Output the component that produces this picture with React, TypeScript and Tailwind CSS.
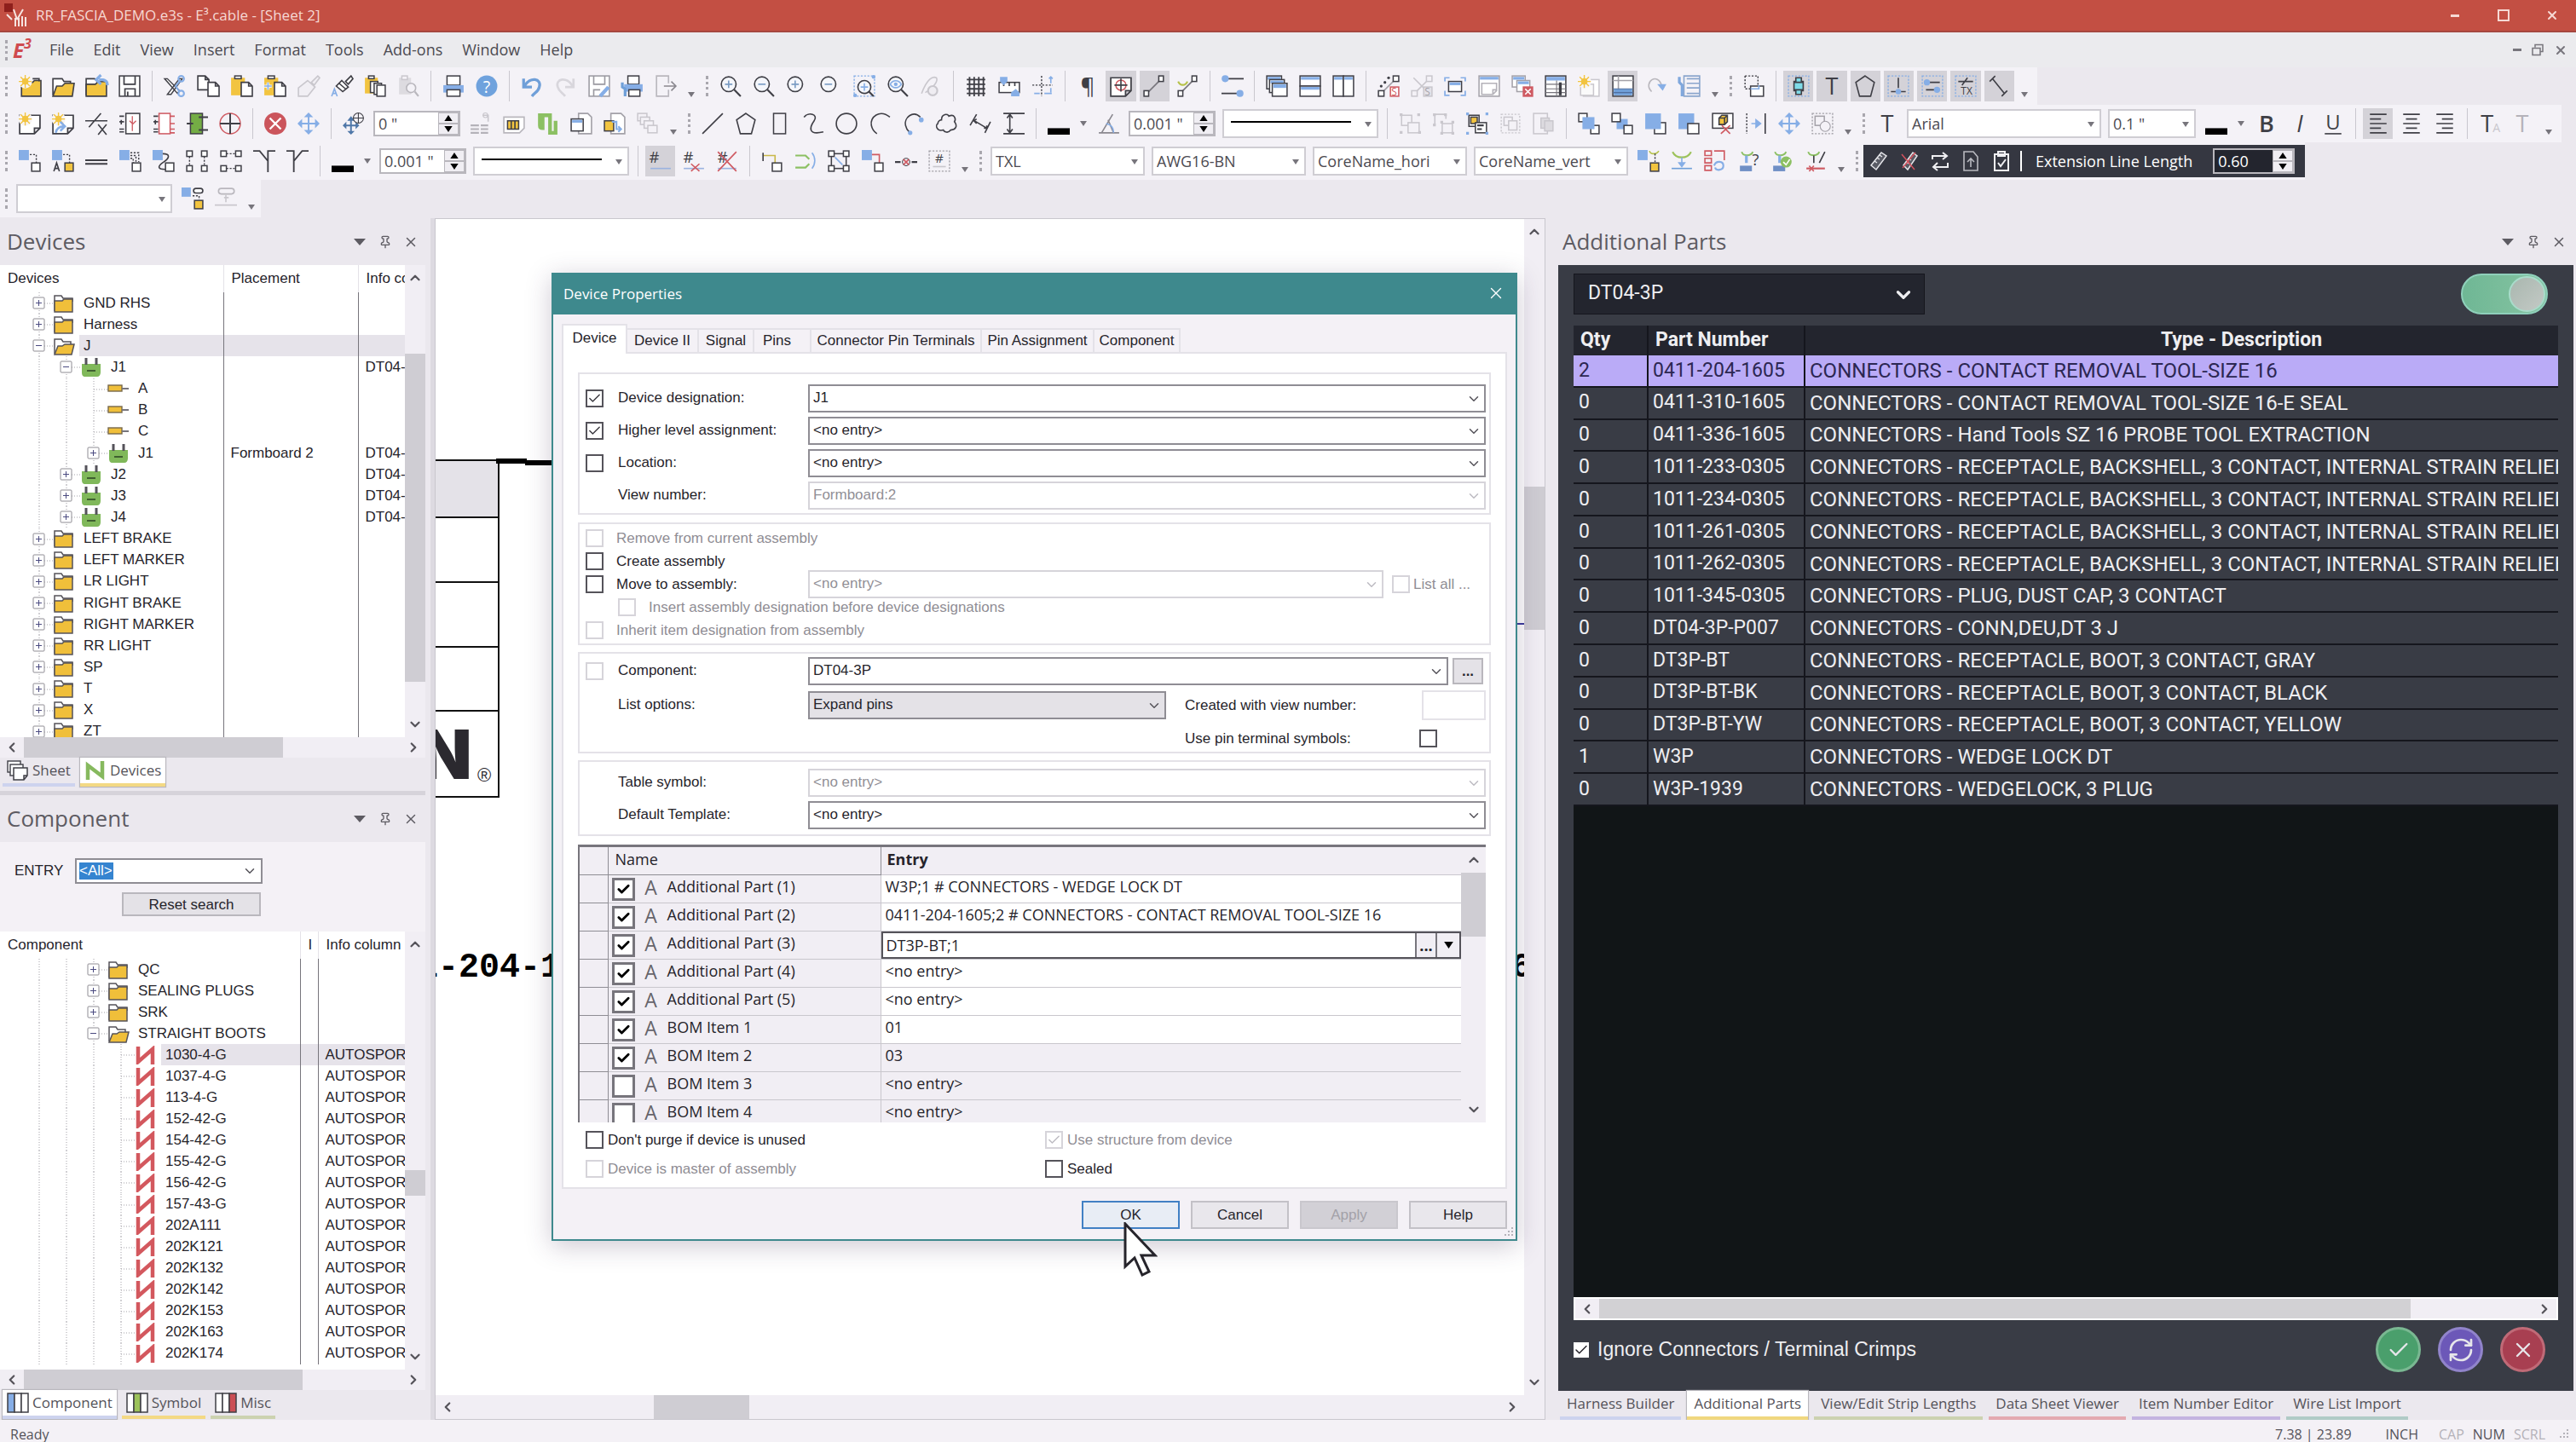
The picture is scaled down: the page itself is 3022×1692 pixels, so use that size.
import React from 'react';
import { Check, ChevronDown, ChevronLeft, ChevronRight, ChevronUp, Pin, RefreshCw, X } from 'lucide-react';

const K = '#3f3f46';
const B = '#86aee6';
const Y = '#f2c440';
const G = '#8cc063';
const R = '#cf5a62';
const L = '#c9c7cd';

const sq = (x: number, y: number, w: number, h: number, fill = '#fff', stroke = K) => (
  <rect x={x} y={y} width={w} height={h} fill={fill} stroke={stroke} strokeWidth={1.4} />
);

const line = (d: string, stroke = K, fill = 'none', width = 1.5) => (
  <path d={d} fill={fill} stroke={stroke} strokeWidth={width} />
);

const dots = (d: string, stroke = K) => (
  <path d={d} fill="none" stroke={stroke} strokeWidth={1.3} strokeDasharray="2 1.6" />
);

const glyph = (text: string, x: number, y: number, size: number, fill = K) => (
  <text x={x} y={y} fontSize={size} fill={fill} stroke="none" textAnchor="middle" fontFamily="Open Sans, sans-serif">
    {text}
  </text>
);

const star = (
  <>
    <circle cx="7" cy="7" r="7.5" fill="#f7f4f4" />
    {line('M7 0v14M0 7h14M2 2l10 10M12 2L2 12', Y, 'none', 1.3)}
    <circle cx="7" cy="7" r="3.5" fill={Y} />
  </>
);
const lens = (plus: boolean, tail: boolean) => (
  <>
    <circle cx="10" cy="10" r="8" fill="#f4f6fb" stroke={K} strokeWidth="1.5" />
    {line(plus ? 'M6 10h8M10 6v8' : 'M6 10h8', '#7a9cc4')}
    {tail && line('M16 16l7 7', K, 'none', 2)}
  </>
);
const page = (stroke = K) => line('M1 3h22v14l-6 6H1zM23 17h-6v6', stroke, '#fff', 1.6);
const selectBox = (stroke = B) => dots('M1 1h22v22H1z', stroke);
const drop = line('M4 2c1 5 10 5 12 0', G, 'none', 1.8);
const smallPage = (x: number, y: number) => (
  <g transform={`translate(${x} ${y})`}>{line('M0 0h8l4 4v11H0zM8 0v4h4', K, '#fff')}</g>
);

const ICONS: Record<string, React.ReactNode> = {
  newProject: <>{line('M3 8h12l2-2h7v17H3z', K, Y)}{line('M15 4h7v3')}{star}</>,
  open: <>{line('M1 22V4h10l2 3h7v4', K, '#fff')}{line('M1 23l4-11h6l3-3h10l-2 14z', K, Y)}</>,
  openSheet: <>{line('M1 22V4h9l3 3', K, '#fff')}{line('M1 10h10l3-3h9v16H1z', K, Y)}{line('M24 11c0-5-3-6-9-6M17 0l-5 5 5 5', B, 'none', 3)}</>,
  save: <>{sq(1, 1, 22, 22)}{line('M6 1v9h12V1M7 23v-8h11v8M10 18v5', K, 'none', 1.6)}</>,
  cut: <>{line('M1 4h3l13 13-2 3zM20 4h-3L4 21h4z', K, '#fff', 1.3)}<circle cx="19" cy="4" r="3" fill="none" stroke={B} strokeWidth="2" /><circle cx="19" cy="20" r="3" fill="none" stroke={B} strokeWidth="2" />{line('M17 7l-4 5 4 6', B, 'none', 2)}</>,
  copy: <>{smallPage(1, 1)}{smallPage(12, 8)}</>,
  paste: <><rect x="1" y="3" width="15" height="19" fill={Y} />{sq(5, 1, 7, 3)}{smallPage(12, 8)}</>,
  pasteAdd: <><rect x="1" y="3" width="15" height="19" fill={Y} />{sq(5, 1, 7, 3)}{smallPage(12, 8)}{line('M1 12h8M5 8v8', '#fff', 'none', 3)}{line('M1 12h8M5 8v8', B)}</>,
  brushOff: <>{line('M15 8l7-7 2 2-6 8zM11 6l8 7-8 10H1v-9z', L, '#f1eff4')}</>,
  brush: <>{line('M16 7l6-6 2 3-5 6zM12 6l7 7-6 5-7-6zM9 9l7 6', K, '#fff')}{line('M1 23l3-8 3 8M2 20h4', B)}</>,
  pasteMulti: <><rect x="1" y="3" width="14" height="17" fill={Y} />{sq(5, 1, 6, 3)}{sq(7, 7, 8, 12)}{sq(11, 9, 8, 12)}{sq(14, 11, 9, 12)}</>,
  findPaste: <><rect x="2" y="3" width="13" height="18" fill="#dddbe0" />{sq(5, 1, 6, 4, '#f4f2f7', L)}<circle cx="15" cy="14" r="5" fill="#f4f2f7" stroke="#b9b7bd" strokeWidth="1.5" />{line('M19 18l4 5', '#b9b7bd', 'none', 2)}</>,
  print: <>{sq(5, 1, 14, 10)}<rect x="1" y="11" width="22" height="8" fill={B} />{sq(5, 16, 14, 7)}</>,
  help: <><circle cx="12" cy="12" r="11.5" fill="#6fa2dd" />{glyph('?', 12, 19, 18, '#fff')}</>,
  undo: line('M3 4v9h9M4 12C10 1 23 4 20 13c-1 5-5 6-8 10', '#6f9fd8', 'none', 3),
  redo: line('M21 4v9h-9M20 12C14 1 1 4 4 13c1 5 5 6 8 10', '#d8d6dc', 'none', 2.5),
  saveEdit: <>{sq(1, 1, 22, 22, '#fff', '#9a99a0')}{line('M6 1v9h12V1M6 23v-7h7', '#9a99a0')}{line('M13 23l9-10', B, 'none', 4)}</>,
  printCfg: <>{sq(7, 1, 12, 9)}<rect x="3" y="10" width="20" height="8" fill={B} />{sq(8, 16, 12, 7)}{line('M1 8v5l3 2v8', '#6f9fd8', 'none', 3)}</>,
  exportOff: <>{line('M15 9V1H2v22h13v-7', '#b9b7bd')}{line('M10 12h13M18 7l5 5-5 5', '#8a888f')}</>,
  zoomInW: lens(true, true),
  zoomOutW: lens(false, true),
  zoomIn: lens(true, false),
  zoomOut: lens(false, false),
  zoomArea: <>{dots('M1 1h22v22H1z', B)}<circle cx="12" cy="13" r="7" fill="#f4f6fb" stroke={K} strokeWidth="1.5" />{line('M8 13h8M12 9v8', B)}{line('M17 18l5 5', K, 'none', 2)}<circle cx="22" cy="2" r="2" fill={B} /><circle cx="2" cy="22" r="2" fill={B} /></>,
  zoomEye: <><circle cx="10" cy="10" r="8" fill="#f4f6fb" stroke={K} strokeWidth="1.5" />{line('M4 10c3-5 9-5 12 0-3 5-9 5-12 0z', B)}<circle cx="10" cy="10" r="2" fill={B} />{line('M16 16l7 7', K, 'none', 2)}</>,
  zoomPen: <>{line('M2 20C8 4 14 1 18 3c2 3-2 10-12 16', L)}<circle cx="14" cy="17" r="5" fill="#efedf2" stroke={L} strokeWidth="2" /></>,
  grid: line('M2 5h20M2 10h20M2 15h20M2 20h20M5 2v21M10 2v21M15 2v21M20 2v21', K, 'none', 1.7),
  ruler: <>{sq(1, 8, 22, 11)}{line('M6 8v4M12 8v4M18 8v4')}<path d="M2 2h8v5l-4 4-4-4zM14 23h9v-4l-4-4-5 4z" fill={B} /></>,
  snap: <>{dots('M1 11h22M11 1v22')}{line('M21 2v7M19 4l2-2 2 2M3 20h6M14 20h8M21 14v5', B)}</>,
  pilcrow: glyph('¶', 12, 20, 24),
  origin: <>{page()}<circle cx="12" cy="11" r="5.5" fill="none" stroke={R} strokeWidth="1.4" />{line('M12 4v14M5 11h14')}</>,
  connect: <>{line('M5 19L19 5', '#77757c')}{sq(1, 17, 5, 6)}{sq(17, 1, 5, 6)}</>,
  connectGreen: <>{line('M5 19L19 5', '#77757c')}{sq(2, 17, 5, 6)}{sq(17, 1, 5, 6)}{line('M2 7c2 5 8 5 10 0', '#b6c24a', 'none', 2)}</>,
  sliders: <>{line('M4 4h20M0 20h20')}<circle cx="4" cy="4" r="3.8" fill={B} /><circle cx="20" cy="20" r="3.8" fill={B} /></>,
  cascade: <>{sq(1, 1, 16, 14)}<path d="M2 2h14v3H2z" fill={B} />{sq(4, 5, 16, 14)}<path d="M5 6h14v3H5z" fill={B} />{sq(7, 9, 16, 14)}<path d="M8 10h14v4H8z" fill={B} /></>,
  tileH: <>{sq(1, 1, 22, 11)}{sq(1, 12, 22, 11)}<path d="M2 2h20v3H2zM2 13h20v3H2z" fill={B} /></>,
  tileV: <>{sq(1, 1, 11, 22)}{sq(12, 1, 11, 22)}<path d="M2 2h9v3H2zM13 2h9v3h-9z" fill={B} /></>,
  autoS: <>{line('M7 17L18 6', '#a3a1a8')}<circle cx="4" cy="12" r="1.5" fill={K} /><circle cx="8" cy="8" r="1.5" fill={K} /><circle cx="12" cy="3" r="1.5" fill={K} />{sq(1, 17, 6, 6)}{sq(17, 1, 6, 6)}{sq(14, 13, 9, 10, '#fff', R)}{glyph('S', 18, 22, 11, R)}</>,
  autoSOff: <>{line('M3 3l17 17M7 17L18 6', L)}{sq(1, 17, 6, 6, '#f4f2f7', L)}{sq(17, 1, 6, 6, '#f4f2f7', L)}{sq(14, 13, 9, 10, '#e4e2e8', L)}{glyph('S', 18, 22, 11, '#a3a1a8')}</>,
  focus: <>{line('M1 7V3h5M18 3h5v4M23 17v5h-5M6 22H1v-5', B, 'none', 1.6)}{sq(5, 7, 14, 11)}<path d="M6 8h12v3H6z" fill={B} /></>,
  winPage: <>{sq(1, 1, 22, 22, '#fff', '#a3a1a8')}<path d="M2 2h20v3H2z" fill={B} />{line('M4 9h16v8l-4 4H4zM20 16h-4v5', '#b4b2b9')}</>,
  winClose: <>{sq(1, 1, 14, 12, '#fff', '#a3a1a8')}{sq(6, 6, 14, 12, '#fff', '#a3a1a8')}<path d="M2 2h12v3H2zM7 7h12v3H7z" fill={B} />{sq(13, 13, 10, 10, R, R)}{line('M15 15l6 6M21 15l-6 6', '#fff')}</>,
  sheetTable: <>{sq(1, 1, 22, 22)}<path d="M2 2h20v4H2z" fill={B} />{line('M1 10h22M1 15h22M13 6v17M1 19h22', '#77757c', 'none', 1)}{line('M17 8v14', K, 'none', 3)}</>,
  newWin: <>{sq(6, 5, 17, 18, '#fff', L)}{sq(3, 10, 14, 12, '#fafafa', L)}{star}</>,
  panelBottom: <>{sq(1, 1, 22, 22)}{line('M7 1v15M1 6h22', '#a3a1a8')}<path d="M2 15h20v7H2z" fill="#6f9fd8" />{line('M1 15h22M1 19h22', '#4f6f9f', 'none', 1)}</>,
  reload: <>{line('M7 18C-3 8 14-4 18 12', '#b9b7bd')}<path d="M13 10h10l-4 7z" fill={B} /></>,
  listTool: <>{line('M9 4h14M9 9h14M9 14h14M9 20h14M6 1h17v22H6z', '#8ba6cd')}{line('M1 2v6l3 3v12', '#7fa7dd', 'none', 3)}</>,
  overlap: <>{dots('M2 1h14v14H2z')}{sq(8, 12, 14, 11)}{line('M8 15h9v-4', B)}</>,
  plugSel: <>{selectBox()}{line('M9 3h6v4h2v10h-2v4H9v-4H7V7h2zM7 8h10M7 16h10', K, '#7fdbe8')}</>,
  bigT: glyph('T', 12, 21, 25),
  pentagon: line('M12 1l10 7-4 15H6L2 8z'),
  selDown: <>{selectBox()}{line('M12 3v11M4 18h16')}<circle cx="12" cy="18" r="3" fill={B} /></>,
  selSlide: <>{selectBox()}{line('M8 8h12M5 16h12')}<circle cx="6" cy="8" r="3.4" fill={B} /><circle cx="17" cy="16" r="3.4" fill={B} /></>,
  selTx: <>{selectBox()}{line('M4 7h16M8 11l6-8')}{glyph('TX', 13, 21, 11)}</>,
  dimension: <>{line('M5 4l13 16M2 7l6-6M15 23l6-6')}</>,
  newSheet: <>{page()}{star}</>,
  newSheetLink: <>{page()}{star}{line('M4 22c1-5 4-7 9-7M9 10l5 5-5 5', B, 'none', 2.4)}</>,
  netX: <>{line('M0 9h24M4 16L17 1')}{line('M14 13l9 11M23 13l-9 11')}</>,
  symbolRed: <>{sq(8, 1, 15, 22)}{line('M1 4h5M1 10h5M3 8v5M1 18h5M1 21h5')}{line('M15 4v16M19 9l-4 4M12 9l3 3', R, 'none', 1.2)}</>,
  block: <>{sq(7, 1, 12, 22, '#fff', R)}{line('M1 4h5M1 10h5M3 8v5M1 18h5M1 21h5')}{line('M19 4h5M19 12h5M19 18h5M19 22h5', R)}</>,
  blockGreen: <>{sq(5, 1, 13, 22, '#74ad45')}{line('M1 12h7M14 5h10M14 19h10', K, 'none', 1.8)}</>,
  crosshair: <><circle cx="12" cy="12" r="11" fill="none" stroke={R} strokeWidth="1.4" />{line('M12 1v22M1 12h22', K, 'none', 1.8)}</>,
  removeX: <><circle cx="12" cy="12" r="12" fill="#cb555c" />{line('M6 6l12 12M18 6L6 18', '#fff', 'none', 2.2)}</>,
  move: <>{line('M12 3v18M3 12h18', B, 'none', 1.8)}<path d="M12 0l5 5H7zM12 24l5-5H7zM0 12l5-5v10zM24 12l-5-5v10z" fill={B} /></>,
  moveOrigin: <>{line('M9 7v15M2 14h14', '#4f77a8', 'none', 1.8)}<path d="M9 4l4 5H5zM9 24l4-4H5zM0 14l4-4v8zM18 14l-4-4v8z" fill="#4f77a8" /><circle cx="17" cy="6" r="5.5" fill="none" stroke={K} />{line('M17 0v12M11 6h12', K, 'none', 1)}</>,
  stackOff: <>{line('M1 14h9M1 18h9M1 22h9M12 14h8M12 18h8M12 22h8', '#b4b2b9', 'none', 2)}{line('M14 3h6v7', L)}<circle cx="17" cy="3" r="2.5" fill="none" stroke={L} /></>,
  sheetGold: <>{line('M1 5h22v12l-5 5H1z', '#b9b7bd', '#fff')}{sq(5, 9, 12, 9, Y)}{line('M9 9v9M13 9v9')}</>,
  wave: line('M4 1v13c0 2 1 3 3 3V3h8v19h6V9', G, 'none', 4),
  sheetCopy: <>{line('M9 1h10l4 4v18H9z', '#a3a1a8', '#fff')}{sq(1, 7, 13, 13)}<path d="M2 8h11v3H2z" fill={B} /></>,
  sheetGoldCopy: <>{line('M8 1h11l4 4v18H8z', '#a3a1a8', '#fff')}{sq(1, 9, 10, 11, Y)}{line('M9 10h5v8h5M16 15l3 3-3 3', B, 'none', 2)}</>,
  layersOff: <>{sq(1, 1, 10, 8, '#f4f2f7', L)}{sq(4, 5, 10, 8, '#f4f2f7', L)}{sq(8, 9, 10, 8, '#f4f2f7', L)}{sq(12, 14, 10, 8, '#f4f2f7', L)}</>,
  lineTool: line('M1 23L23 1'),
  rect: sq(6, 1, 13, 22, 'none'),
  spline: line('M2 5c5-6 16-3 11 4s-7 16 10 12'),
  circle: <circle cx="12" cy="12" r="11" fill="none" stroke={K} strokeWidth="1.5" />,
  arc: line('M23 5C12-4 1 5 3 14c1 5 3 7 6 9'),
  arcBlue: <>{line('M20 5C12-3 2 6 4 14c1 5 3 6 5 8')}<circle cx="21" cy="8" r="2.6" fill={B} /><circle cx="9" cy="22" r="2.4" fill={B} /></>,
  cloud: line('M6 8c0-7 7-7 8-4 6-3 8 3 6 6 4 5 1 9-4 9-3 4-7 2-8 0-7 2-9-5-6-7 0-2 2-4 4-4z'),
  dimTool: line('M4 8l15 9M8 2L1 14M23 10l-6 12M8 7l-3 2 3 3M16 17h3v-3'),
  beam: line('M1 1h23M1 23h23M8 3v18M5 6l3-4 3 4M5 18l3 4 3-4'),
  swatch: <rect x="0" y="17" width="24" height="7" fill="#000" />,
  angle: <>{line('M1 22h22M4 22l12-20M11 8l6 14', '#8a888f')}{line('M9 12c5 1 8 4 8 10', B)}</>,
  group1: <>{sq(3, 3, 11, 11, '#f4f2f7', L)}{sq(10, 11, 12, 11, '#f4f2f7', L)}<path d="M1 1h3v3H1zM20 1h3v3h-3zM1 20h3v3H1zM21 20h3v3h-3z" fill={L} /></>,
  group2: <>{line('M3 14V2h12v5', L)}{sq(11, 12, 11, 10, '#f4f2f7', L)}<path d="M1 1h3v3H1zM13 1h3v3h-3zM1 12h3v3H1zM9 9h3v3H9zM21 9h3v3h-3zM9 21h3v3H9zM21 21h3v3h-3z" fill={L} /></>,
  group3: <>{sq(3, 3, 11, 12)}{sq(5, 5, 7, 7, Y)}{sq(10, 11, 12, 11)}{line('M12 14h7M12 18h5', K, 'none', 2)}<path d="M0 0h3v3H0zM21 0h3v3h-3zM0 21h3v3H0zM21 21h3v3h-3z" fill={B} /></>,
  group4: <>{dots('M2 2h20v20H2z', L)}{sq(5, 5, 9, 9, '#f4f2f7', L)}{sq(10, 9, 9, 10, '#f4f2f7', L)}</>,
  group5: <>{sq(1, 1, 15, 22, '#f4f2f7', L)}{sq(9, 6, 9, 11, '#dddbe0', L)}{sq(13, 9, 9, 11, '#dddbe0', L)}</>,
  front: <>{sq(1, 1, 9, 9)}{sq(14, 14, 9, 9)}<rect x="5" y="5" width="13" height="13" fill={B} /></>,
  forward: <><rect x="6" y="7" width="12" height="11" fill={B} />{sq(1, 1, 9, 9)}{sq(14, 14, 9, 9)}</>,
  back: <>{sq(11, 11, 12, 12)}<rect x="1" y="1" width="17" height="17" fill={B} /></>,
  backward: <><rect x="1" y="1" width="17" height="17" fill={B} />{sq(11, 12, 12, 11)}</>,
  cube: <>{sq(1, 1, 22, 16)}{line('M8 6l3-3h6v7l-3 3H8zM8 6h6v7M14 6l3-3', K, Y)}{line('M10 23l10-9M11 14l9 9', R)}</>,
  mirror: <>{line('M22 1v22')}{dots('M2 1v22')}{line('M7 12h7M12 8l5 4-5 4z', B, B)}</>,
  selShapes: <>{dots('M1 1h22v22H1z', '#a3a1a8')}{sq(4, 4, 10, 10, '#f4f2f7', '#a3a1a8')}<circle cx="15" cy="15" r="5.5" fill="#f4f2f7" stroke="#a3a1a8" /></>,
  bold: <g fontWeight="600">{glyph('B', 12, 21, 25)}</g>,
  italic: <g fontStyle="italic">{glyph('I', 12, 21, 25)}</g>,
  underline: <>{glyph('U', 12, 18, 22)}{line('M3 23h18')}</>,
  alignL: line('M3 2h18M3 7h12M3 12h18M3 17h12M3 22h18'),
  alignC: line('M3 2h18M6 7h12M3 12h18M6 17h12M3 22h18'),
  alignR: line('M3 2h18M9 7h12M3 12h18M9 17h12M3 22h18'),
  textA: <>{glyph('T', 9, 21, 25)}{glyph('A', 19, 21, 13, L)}</>,
  textOff: glyph('T', 11, 21, 25, '#b4b2b9'),
  wireSq: <><rect x="0" y="0" width="11" height="11" fill={B} />{dots('M12 5h7v9')}{sq(14, 14, 9, 9)}</>,
  wireA: <><rect x="0" y="0" width="11" height="11" fill={B} />{dots('M12 5h7v9')}{sq(14, 14, 9, 9, Y)}{line('M2 23l3-9 3 9M3 20h4')}</>,
  parallel: line('M0 11h24M0 15h24', K, 'none', 1.8),
  wireMulti: <><rect x="0" y="0" width="11" height="11" fill={B} />{dots('M12 3h9v10M12 6h6v8M12 9h3v5')}{sq(14, 14, 9, 9)}</>,
  wireCurve: <><rect x="0" y="0" width="11" height="11" fill={B} />{line('M11 4c9 0 7 5 1 9s-8 8 2 8')}{sq(14, 14, 9, 9)}</>,
  pinsV: <>{dots('M4 7v10M20 7v10')}{sq(1, 1, 6, 6)}{sq(17, 1, 6, 6)}{sq(1, 17, 6, 6)}{sq(17, 17, 6, 6)}</>,
  pinsH: <>{dots('M7 4h10M7 20h10')}{sq(1, 1, 6, 6)}{sq(17, 1, 6, 6)}{sq(1, 17, 6, 6)}{sq(17, 17, 6, 6)}</>,
  branchL: line('M0 1h7l9 11M24 1h-8v23', K, 'none', 1.7),
  branchR: line('M24 1h-7L8 12M0 1h8v23', K, 'none', 1.7),
  hashOn: <>{glyph('#', 5, 14, 17)}{line('M1 20h22', '#9bb3e0')}</>,
  hashX: <>{glyph('#', 6, 14, 17)}{line('M1 20h22', '#9bb3e0')}{line('M9 15l9 8M18 15l-9 8', R)}</>,
  hashRed: <>{glyph('#', 7, 14, 17)}{line('M2 20h20', '#9bb3e0')}{line('M2 2l20 21M22 2L2 23', R)}</>,
  route: <>{line('M2 6h13v8', '#c9b94a')}{line('M2 3v9')}{sq(12, 14, 10, 9)}</>,
  routeLoop: <>{line('M1 6h11l4 4M1 19h11l4-4', G, 'none', 2)}{line('M19 3c4 5 4 12 0 17', B)}</>,
  frameNodes: <>{sq(4, 4, 16, 16, 'none')}{sq(1, 1, 6, 6)}{sq(17, 1, 6, 6)}{sq(1, 17, 6, 6)}{sq(17, 17, 6, 6)}{line('M8 8l8 8', B)}</>,
  wireRed: <><rect x="0" y="0" width="11" height="11" fill={B} />{line('M11 5h8v9', R)}{sq(14, 14, 9, 9)}</>,
  splice: <>{line('M0 13h6M18 13h6', K, 'none', 2)}<circle cx="12" cy="13" r="4" fill="none" stroke={K} />{line('M9 10l6 6M15 10l-6 6', R)}</>,
  hashBox: <>{dots('M1 1h22v22H1z', '#a3a1a8')}{glyph('#', 12, 14, 14)}{line('M5 18h14', L)}</>,
  termGold: <><rect x="0" y="0" width="11" height="11" fill={B} />{line('M13 1c1 4 8 4 10 0', '#b6c24a')}{dots('M19 4v9')}{sq(14, 14, 9, 9, Y)}</>,
  termDown: <>{line('M2 2c4 8 16 8 20 0', '#9cc25a', 'none', 2)}{line('M12 8v8M9 14l3 4 3-4z', B, B)}{line('M1 20h22', '#6f9fd8')}</>,
  listSwap: <>{line('M1 1h7v5H1zM1 9h7v5H1zM1 17h7v5H1zM11 1h11v10', R)}{line('M11 17c2-6 10-5 10 0s-8 6-9 2', B, 'none', 2)}</>,
  termAsk: <>{drop}{line('M9 6v8', B, 'none', 3)}<rect x="2" y="17" width="13" height="6" fill="#6f8fc5" />{glyph('?', 19, 17, 17)}</>,
  termOk: <>{drop}{line('M9 6v8', B, 'none', 3)}<rect x="2" y="17" width="13" height="6" fill="#6f8fc5" /><circle cx="16" cy="13" r="6" fill={G} />{line('M13 13l3 3 4-6', '#fff')}</>,
  termCut: <>{drop}{line('M10 6v8M16 14l6-12')}{line('M2 20h20', R, 'none', 2)}{line('M5 17l5 6M10 17l-5 6', R)}</>,
  bundleGold: <><rect x="0" y="0" width="10" height="10" fill={B} /><rect x="13" y="1" width="10" height="5" rx="2.5" fill="#fff" stroke={K} strokeWidth="1.5" />{dots('M12 9h7v4')}{sq(14, 14, 9, 9, Y)}</>,
  bundleOff: <><rect x="4" y="1" width="17" height="6" rx="3" fill="none" stroke="#b9b7bd" strokeWidth="1.5" />{line('M12 8v8M10 11h5M0 19h24', '#c9c7cd')}</>,
};

const GROUP_WIDTHS = [
  '',
  'w-[39px]',
  'w-[79px]',
  'w-[118px]',
  'w-[157px]',
  'w-[197px]',
  'w-[236px]',
  'w-[275px]',
  'w-[314px]',
  'w-[354px]',
  'w-[393px]',
];

// A run of toolbar buttons. Names that start with "*" are pressed.
function Tools({ names }: { names: string }) {
  const items = names.split(' ');
  return (
    <div className={`flex h-9 shrink-0 ${GROUP_WIDTHS[items.length]}`}>
      {items.map((item) => {
        const pressed = item.startsWith('*');
        const name = pressed ? item.slice(1) : item;
        return (
          <button
            key={name}
            type="button"
            aria-label={name}
            aria-pressed={pressed}
            className={`flex flex-1 items-center justify-center border-x-2 border-transparent bg-clip-padding ${pressed ? 'bg-[#d4d2d8]' : ''}`}
          >
            <svg viewBox="0 0 24 24" className="h-[26px] w-[26px] overflow-visible">
              {ICONS[name]}
            </svg>
          </button>
        );
      })}
    </div>
  );
}

const Sep = () => <div className="mx-[6px] h-9 w-px shrink-0 bg-[#c9c7ce]" />;
const Grip = () => <div className="mx-[6px] h-6 w-0 shrink-0 border-l-3 border-dotted border-[#a9a7ae]" />;

function Tri({ className = '' }: { className?: string }) {
  return (
    <svg viewBox="0 0 8 6" className={`h-[6px] w-2 shrink-0 fill-[#77757c] ${className}`}>
      <path d="M0 0h8L4 6z" />
    </svg>
  );
}

const More = () => <Tri className="mr-[7px] ml-[6px] mt-5" />;

function Swatch() {
  return (
    <div className="flex items-center">
      <Tools names="swatch" />
      <Tri className="mx-[6px]" />
    </div>
  );
}

function Spin({ value, label, dark }: { value: string; label: string; dark?: boolean }) {
  return (
    <div className={`mx-1 flex h-[30px] shrink-0 border-2 border-[#b9b7bd] ${dark ? 'w-[96px] bg-[#23252e]' : 'w-[102px] bg-white'}`}>
      <input
        aria-label={label}
        defaultValue={value}
        className={`min-w-0 flex-1 pl-1 text-[18px] outline-none ${dark ? 'text-white' : 'text-[#4c4a51]'}`}
      />
      <div className="flex w-6 flex-col">
        <button type="button" aria-label={`${label} up`} className="flex flex-1 items-center justify-center border border-[#b9b7bd] bg-[#f0eef3]">
          <svg viewBox="0 0 8 6" className="h-[7px] w-[10px]"><path d="M4 0l4 6H0z" /></svg>
        </button>
        <button type="button" aria-label={`${label} down`} className="flex flex-1 items-center justify-center border border-[#b9b7bd] bg-[#f0eef3]">
          <svg viewBox="0 0 8 6" className="h-[7px] w-[10px]"><path d="M0 0h8L4 6z" /></svg>
        </button>
      </div>
    </div>
  );
}

function ToolSelect({ value = '', label, width, stroke }: { value?: string; label: string; width: string; stroke?: boolean }) {
  return (
    <div className={`relative mx-1 h-[34px] shrink-0 ${width}`}>
      <select aria-label={label} className="h-full w-full appearance-none border-2 border-[#cfcdd3] bg-white pl-1 text-[18px] text-[#4c4a51]">
        <option>{value}</option>
      </select>
      {stroke && <div className="pointer-events-none absolute top-[14px] right-[32px] left-[10px] h-[2px] bg-black" />}
      <Tri className="pointer-events-none absolute top-[15px] right-2" />
    </div>
  );
}

function DarkToolbar() {
  const icons: [string, React.ReactNode][] = [
    ['Measure', line('M3 17L15 2l6 4L9 22zM7 12l3 2M10 8l3 2M13 5l3 2', '#e6e6ea', '#5a5c66')],
    ['Clear measure', <>{line('M5 17L16 2l5 4L10 22zM8 13l3 2M11 9l3 2', '#e6e6ea', '#5a5c66')}{line('M3 4l15 18M19 2L4 20', '#d2525e')}</>],
    ['Swap', line('M3 10V6h16M15 2l5 4-5 4M21 14v5H5M9 14l-5 5 5 4', '#f0f0f3', 'none', 2)],
    ['Upload file', line('M4 1h11l5 6v16H4zM12 19v-9M8 13l4-4 4 4', '#b9bac0', 'none', 1.6)],
    ['Checklist', line('M4 4h16v19H4zM8 1h8v5H8zM8 14l3 4 6-8', '#f0f0f3', 'none', 2)],
  ];
  return (
    <div className="flex h-[38px] items-center bg-[#353741]">
      {icons.map(([name, icon]) => (
        <button key={name} type="button" aria-label={name} className="flex w-9 justify-center">
          <svg viewBox="0 0 24 24" className="h-[26px] w-6">{icon}</svg>
        </button>
      ))}
      <div className="mx-1 h-6 w-[2px] bg-white" />
      <span className="mr-[20px] ml-3 text-[18px] text-white">Extension Line Length</span>
      <Spin label="Extension line length" value="0.60" dark />
      <div className="w-[8px]" />
    </div>
  );
}

function Toolbars() {
  return (
    <div className="flex flex-col items-start bg-[#ebe8ee]">
      <div className="flex h-11 items-center bg-[#f4f2f7] pr-1">
        <Grip />
        <Tools names="newProject open openSheet save" />
        <Sep />
        <Tools names="cut copy paste pasteAdd brushOff brush pasteMulti findPaste" />
        <Sep />
        <Tools names="print help" />
        <Sep />
        <Tools names="undo redo saveEdit printCfg exportOff" />
        <More />
        <Grip />
        <Tools names="zoomInW zoomOutW zoomIn zoomOut zoomArea zoomEye zoomPen" />
        <Sep />
        <Tools names="grid ruler snap" />
        <Sep />
        <Tools names="pilcrow *origin *connect connectGreen" />
        <Sep />
        <Tools names="sliders" />
        <Sep />
        <Tools names="cascade tileH tileV" />
        <Sep />
        <Tools names="autoS autoSOff focus winPage winClose sheetTable newWin *panelBottom reload listTool" />
        <More />
        <Grip />
        <Tools names="overlap" />
        <Sep />
        <Tools names="*plugSel *bigT *pentagon *selDown *selSlide *selTx *dimension" />
        <More />
      </div>
      <div className="flex h-11 items-center bg-[#f4f2f7] pr-1">
        <Grip />
        <Tools names="newSheet newSheetLink netX symbolRed block blockGreen crosshair" />
        <Sep />
        <Tools names="removeX move" />
        <Sep />
        <Tools names="moveOrigin" />
        <Spin label="Rotation" value="0 &quot;" />
        <Tools names="stackOff sheetGold wave sheetCopy sheetGoldCopy layersOff" />
        <More />
        <Grip />
        <Tools names="lineTool pentagon rect spline circle arc arcBlue cloud dimTool beam" />
        <Sep />
        <Swatch />
        <Tools names="angle" />
        <Spin label="Line width" value="0.001 &quot;" />
        <ToolSelect label="Line style" width="w-[183px]" stroke />
        <Sep />
        <Tools names="group1 group2 group3 group4 group5" />
        <Sep />
        <Tools names="front forward back backward cube mirror move selShapes" />
        <More />
        <Grip />
        <Tools names="bigT" />
        <ToolSelect label="Font" value="Arial" width="w-[228px]" />
        <ToolSelect label="Font size" value="0.1 &quot;" width="w-[103px]" />
        <Swatch />
        <Tools names="bold italic underline" />
        <Sep />
        <Tools names="*alignL alignC alignR" />
        <Sep />
        <Tools names="textA textOff" />
        <More />
      </div>
      <div className="flex h-11 items-center bg-[#f4f2f7]">
        <Grip />
        <Tools names="wireSq wireA parallel wireMulti wireCurve pinsV pinsH branchL branchR" />
        <Sep />
        <Swatch />
        <Spin label="Net width" value="0.001 &quot;" />
        <ToolSelect label="Net style" width="w-[183px]" stroke />
        <Sep />
        <Tools names="*hashOn hashX hashRed" />
        <Sep />
        <Tools names="route routeLoop frameNodes wireRed splice hashBox" />
        <More />
        <Grip />
        <ToolSelect label="Wire type" value="TXL" width="w-[181px]" />
        <ToolSelect label="Wire gauge" value="AWG16-BN" width="w-[181px]" />
        <ToolSelect label="Horizontal core name" value="CoreName_hori" width="w-[181px]" />
        <ToolSelect label="Vertical core name" value="CoreName_vert" width="w-[181px]" />
        <Tools names="termGold termDown listSwap termAsk termOk termCut" />
        <More />
        <Grip />
        <DarkToolbar />
      </div>
      <div className="flex h-11 items-center bg-[#f4f2f7]">
        <Grip />
        <ToolSelect label="Bundle" width="w-[183px]" />
        <Tools names="bundleGold bundleOff" />
        <More />
      </div>
    </div>
  );
}

function PanelTitle({ children }: { children: string }) {
  return (
    <div className="flex h-[55px] shrink-0 items-center pr-[2px] pl-2 text-[#5d5b62]">
      <h2 className="flex-1 text-[26px]">{children}</h2>
      <button type="button" aria-label="Panel menu" className="flex w-[30px] justify-center">
        <svg viewBox="0 0 14 8" className="h-2 w-[14px] fill-current"><path d="M0 0h14L7 8z" /></svg>
      </button>
      <button type="button" aria-label="Pin panel" className="flex w-[30px] justify-center"><Pin size={16} /></button>
      <button type="button" aria-label="Close panel" className="flex w-[30px] justify-center"><X size={18} /></button>
    </div>
  );
}

function FolderIcon({ open }: { open?: boolean }) {
  return (
    <svg viewBox="0 0 26 22" className="h-[22px] w-[26px]">
      {open ? (
        <>
          {line('M2 20V3h8l2 3h9v5', '#55535a', '#fff')}
          {line('M2 21l4-10h5l3-2h11l-3 12z', '#55535a', '#f0bf3a')}
        </>
      ) : (
        <>
          {line('M2 20V2h8l2 3h11v4', '#55535a', '#fff')}
          {line('M2 8h9l2-2h10v15H2z', '#55535a', '#f0bf3a')}
        </>
      )}
    </svg>
  );
}

function NodeIcon({ kind }: { kind: string }) {
  if (kind === 'folder' || kind === 'open') return <FolderIcon open={kind === 'open'} />;
  return (
    <svg viewBox="0 0 26 22" className="h-[22px] w-[26px]">
      {kind === 'plug' && (
        <>
          <path d="M2 7h22v10c0 3-2 5-4 5H6c-3 0-4-2-4-5z" fill="#80b85a" />
          {line('M7 0v8M19 0v8', '#55535a', 'none', 3)}
          {line('M8 15h10', '#3f5f30', 'none', 2)}
        </>
      )}
      {kind === 'pin' && (
        <>
          {sq(1, 7, 16, 7, '#f0bf3a', '#77684a')}
          {line('M17 11h8', '#77757c', 'none', 2)}
        </>
      )}
      {kind === 'part' && line('M4 1v18L21 4v18', '#d3585e', 'none', 4.5)}
    </svg>
  );
}

const dotted = { stroke: '#a3a1a8', strokeDasharray: '1 2', fill: 'none' };

// One 32px step of the tree: v = vertical only, t = branch, + and - = expander.
function Guide({ type }: { type: string }) {
  return (
    <svg viewBox="0 0 32 25" className="h-[25px] w-8 shrink-0">
      {type !== ' ' && <path d="M16 0v25" {...dotted} />}
      {type !== ' ' && type !== 'v' && <path d="M16 13h16" {...dotted} />}
      {(type === '+' || type === '-') && (
        <>
          <rect x="9" y="6" width="13" height="13" rx="1" fill="#fff" stroke="#8f8d94" />
          <path d={type === '+' ? 'M12 12.5h7M15.5 9v7' : 'M12 12.5h7'} stroke="#4a4a80" />
        </>
      )}
    </svg>
  );
}

type Row = [guides: string, kind: string, label: string, cols?: string[]];

const deviceRows: Row[] = [
  ['+', 'folder', 'GND RHS'],
  ['+', 'folder', 'Harness'],
  ['-', 'open', 'J'],
  ['v-', 'plug', 'J1', ['', 'DT04-']],
  ['vvt', 'pin', 'A'],
  ['vvt', 'pin', 'B'],
  ['vvt', 'pin', 'C'],
  ['vv+', 'plug', 'J1', ['Formboard 2', 'DT04-']],
  ['v+', 'plug', 'J2', ['', 'DT04-']],
  ['v+', 'plug', 'J3', ['', 'DT04-']],
  ['v+', 'plug', 'J4', ['', 'DT04-']],
  ['+', 'folder', 'LEFT BRAKE'],
  ['+', 'folder', 'LEFT MARKER'],
  ['+', 'folder', 'LR LIGHT'],
  ['+', 'folder', 'RIGHT BRAKE'],
  ['+', 'folder', 'RIGHT MARKER'],
  ['+', 'folder', 'RR LIGHT'],
  ['+', 'folder', 'SP'],
  ['+', 'folder', 'T'],
  ['+', 'folder', 'X'],
  ['+', 'folder', 'ZT'],
];

const boots = [
  '1030-4-G', '1037-4-G', '113-4-G', '152-42-G', '154-42-G', '155-42-G', '156-42-G', '157-43-G',
  '202A111', '202K121', '202K132', '202K142', '202K153', '202K163', '202K174',
];

const componentRows: Row[] = [
  ['vv+', 'folder', 'QC'],
  ['vv+', 'folder', 'SEALING PLUGS'],
  ['vv+', 'folder', 'SRK'],
  ['vv-', 'open', 'STRAIGHT BOOTS'],
  ...boots.map((name): Row => ['vvvt', 'part', name, ['', 'AUTOSPOR']]),
];

function VScroll({ thumb, className = 'w-6' }: { thumb: React.ReactNode; className?: string }) {
  return (
    <div className={`flex shrink-0 flex-col items-center bg-[#f1eef4] text-[#55535a] ${className}`}>
      <ChevronUp size={18} strokeWidth={3} className="my-[6px] shrink-0" />
      <div className="flex w-full flex-1 flex-col">{thumb}</div>
      <ChevronDown size={18} strokeWidth={3} className="my-[6px] shrink-0" />
    </div>
  );
}

function HScroll({ thumb, className = 'h-6' }: { thumb: React.ReactNode; className?: string }) {
  return (
    <div className={`flex shrink-0 items-center bg-[#f1eef4] text-[#55535a] ${className}`}>
      <ChevronLeft size={18} strokeWidth={3} className="mx-[5px] shrink-0" />
      <div className="flex h-full flex-1">{thumb}</div>
      <ChevronRight size={18} strokeWidth={3} className="mx-[5px] shrink-0" />
    </div>
  );
}

interface TreeProps {
  heads: string[];
  widths: string[];
  rows: Row[];
  selected: number;
  bodyHeight: string;
  tall: string;
  vthumb: React.ReactNode;
}

function Tree({ heads, widths, rows, selected, bodyHeight, tall, vthumb }: TreeProps) {
  return (
    <div className={`flex shrink-0 bg-white font-['Liberation_Sans',sans-serif] text-[17px] leading-6 text-[#26242b] ${bodyHeight}`}>
      <div className="min-w-0 flex-1 overflow-hidden">
        <table className={`w-[520px] table-fixed border-collapse ${tall}`}>
          <thead>
            <tr className="h-8">
              {heads.map((head, i) => (
                <th key={i} className={`overflow-hidden border-r border-[#e4e2e8] p-0 pl-[9px] text-left font-normal whitespace-nowrap ${widths[i]}`}>
                  {head}
                </th>
              ))}
            </tr>
          </thead>
          <tbody>
            {rows.map(([guides, kind, label, cols = ['', '']], i) => (
              <tr key={i}>
                <td className="border-r border-[#77757c] p-0">
                  <div className="flex items-center pl-[30px]">
                    {guides.split('').map((g, n) => <Guide key={n} type={g} />)}
                    <NodeIcon kind={kind} />
                    <span className={`ml-[5px] flex h-[25px] flex-1 items-center pl-[5px] whitespace-nowrap ${i === selected ? 'bg-[#e6e3ea]' : ''}`}>
                      {label}
                    </span>
                  </div>
                </td>
                {cols.map((col, n) => (
                  <td key={n} className={`border-r border-[#77757c] p-0 pl-[8px] whitespace-nowrap ${i === selected ? 'bg-[#e6e3ea]' : ''}`}>
                    {col}
                  </td>
                ))}
              </tr>
            ))}
          </tbody>
        </table>
      </div>
      <VScroll thumb={vthumb} />
    </div>
  );
}

function DockTab({ icon, label, active, line: under }: { icon?: React.ReactNode; label: string; active?: boolean; line: string }) {
  return (
    <button
      type="button"
      className={`flex h-[34px] items-center gap-1 border-b-4 text-[17px] text-[#55535a] ${icon ? 'px-[5px]' : 'px-2'} ${under} ${active ? 'bg-white shadow-[0_0_1px_1px_#b9b7bd]' : ''}`}
    >
      {icon}
      {label}
    </button>
  );
}

function BarsIcon({ fills }: { fills: string[] }) {
  return (
    <svg viewBox="0 0 26 26" className="h-[26px] w-[26px]">
      {fills.map((fill, i) => <rect key={i} x={1 + i * 8} y="2" width="8" height="22" fill={fill} stroke="#3f3f46" strokeWidth="1.5" />)}
    </svg>
  );
}

function LeftDock() {
  return (
    <aside className="flex w-[505px] shrink-0 flex-col pr-[6px]">
      <PanelTitle>Devices</PanelTitle>
      <Tree
        heads={['Devices', 'Placement', 'Info co']}
        widths={['w-[262px]', 'w-[158px]', 'w-[100px]']}
        rows={deviceRows}
        selected={2}
        bodyHeight="h-[554px]"
        tall="h-[560px]"
        vthumb={<div className="mt-[74px] h-[385px] bg-[#cfcdd3]" />}
      />
      <HScroll thumb={<div className="w-[304px] bg-[#cfcdd3]" />} />
      <div className="flex items-start gap-[6px] pl-[3px]">
        <DockTab
          label="Sheet"
          line="border-[#cdd3ee]"
          icon={<svg viewBox="0 0 26 24" className="h-6 w-[26px]">{sq(1, 1, 15, 13)}{sq(4, 5, 15, 13)}{line('M8 9h16v9l-4 5H8zM24 18h-4v5', K, '#fff')}</svg>}
        />
        <DockTab
          label="Devices"
          active
          line="border-[#f3d984]"
          icon={<svg viewBox="0 0 26 22" className="h-[24px] w-[26px]">{line('M4 22V5l17 13V0', '#86b95e', 'none', 4.5)}</svg>}
        />
      </div>
      <div className="mt-[5px] h-[5px] bg-[#d6d3da]" />
      <PanelTitle>Component</PanelTitle>
      <div className="flex h-[105px] shrink-0 flex-col bg-[#f4f1f6] pt-[19px] font-['Liberation_Sans',sans-serif] text-[17px] text-[#26242b]">
        <div className="flex items-center pl-[17px]">
          <label htmlFor="entry" className="w-[71px]">ENTRY</label>
          <div className="relative h-[30px] w-[220px]">
            <div className="flex h-full items-center border-2 border-[#8f8d94] bg-white">
              <input id="entry" defaultValue="<All>" className="ml-[3px] h-[20px] w-[40px] bg-[#3584d0] text-white" />
            </div>
            <ChevronDown size={18} className="absolute top-[6px] right-[6px] text-[#55535a]" />
          </div>
        </div>
        <button type="button" className="mt-[10px] ml-[143px] h-7 w-[163px] border-2 border-[#b9b7bd] bg-[#e4e2e7]">
          Reset search
        </button>
      </div>
      <Tree
        heads={['Component', 'I', 'Info column']}
        widths={['w-[352px]', 'w-[21px]', 'w-[147px]']}
        rows={componentRows}
        selected={4}
        bodyHeight="h-[514px]"
        tall="h-[508px]"
        vthumb={<div className="mt-[250px] h-[30px] bg-[#cfcdd3]" />}
      />
      <HScroll thumb={<div className="w-[327px] bg-[#cfcdd3]" />} />
      <div className="flex items-start gap-[6px] pl-[3px]">
        <DockTab label="Component" active line="border-[#cdd3ee]" icon={<BarsIcon fills={['#86aee6', '#fff', '#fff']} />} />
        <DockTab label="Symbol" line="border-[#f3d984]" icon={<BarsIcon fills={['#fff', '#9cc25a', '#fff']} />} />
        <DockTab label="Misc" line="border-[#ccd2b0]" icon={<BarsIcon fills={['#fff', '#fff', '#cb4f55']} />} />
      </div>
    </aside>
  );
}

function Tick({ id, checked, disabled }: { id: string; checked?: boolean; disabled?: boolean }) {
  return (
    <span className="relative flex h-[21px] w-[21px] shrink-0">
      <input
        id={id}
        type="checkbox"
        defaultChecked={checked}
        disabled={disabled}
        className={`h-full w-full appearance-none border-2 bg-white ${disabled ? 'border-[#d6d4da]' : 'border-[#55535a]'}`}
      />
      {checked && <Check size={17} className={`pointer-events-none absolute top-[2px] left-[2px] ${disabled ? 'text-[#bdbbc2]' : 'text-[#3a383f]'}`} />}
    </span>
  );
}

interface ComboProps {
  id: string;
  value: string;
  disabled?: boolean;
  gray?: boolean;
  className?: string;
}

function Combo({ id, value, disabled, gray, className = 'flex-1' }: ComboProps) {
  return (
    <div className={`relative h-[33px] shrink-0 ${className}`}>
      <select
        id={id}
        disabled={disabled}
        className={`h-full w-full appearance-none border-2 pb-[2px] pl-1 opacity-100 ${disabled ? 'border-[#d6d4da] text-[#918f96]' : 'border-[#8f8d94]'} ${gray ? 'bg-[#e4e2e7]' : 'bg-white'}`}
      >
        <option>{value}</option>
      </select>
      <ChevronDown size={18} className={`pointer-events-none absolute top-[8px] right-[5px] ${disabled ? 'text-[#bdbbc2]' : 'text-[#55535a]'}`} />
    </div>
  );
}

interface FieldProps extends ComboProps {
  label: string;
  box?: 'on' | 'off' | 'disabled';
  children?: React.ReactNode;
}

function Field({ label, box, children, ...combo }: FieldProps) {
  return (
    <div className="flex h-[33px] items-center">
      <span className="w-[38px]">
        {box && (
          <>
            <Tick id={`${combo.id}-on`} checked={box === 'on'} disabled={box === 'disabled'} />
            <label htmlFor={`${combo.id}-on`} className="sr-only">{label}</label>
          </>
        )}
      </span>
      <label htmlFor={combo.id} className="w-[223px] pb-[2px]">{label}</label>
      <Combo {...combo} />
      {children}
    </div>
  );
}

function TickRow({ id, label, checked, disabled, className = '' }: { id: string; label: string; checked?: boolean; disabled?: boolean; className?: string }) {
  return (
    <div className={`flex h-[27px] items-center ${disabled ? 'text-[#8f8d94]' : ''} ${className}`}>
      <Tick id={id} checked={checked} disabled={disabled} />
      <label htmlFor={id} className="ml-[15px]">{label}</label>
    </div>
  );
}

const tabs = [
  ['Device II', 'w-[84px]'],
  ['Signal', 'w-[65px]'],
  ['Pins', 'w-[67px] pr-3'],
  ['Connector Pin Terminals', 'w-[200px]'],
  ['Pin Assignment', 'w-[132px]'],
  ['Component', 'w-[101px]'],
];

const entries: [string, string, boolean][] = [
  ['Additional Part (1)', 'W3P;1 # CONNECTORS - WEDGE LOCK DT', true],
  ['Additional Part (2)', '0411-204-1605;2 # CONNECTORS - CONTACT REMOVAL TOOL-SIZE 16', true],
  ['Additional Part (3)', 'DT3P-BT;1', true],
  ['Additional Part (4)', '<no entry>', true],
  ['Additional Part (5)', '<no entry>', true],
  ['BOM Item 1', '01', true],
  ['BOM Item 2', '03', true],
  ['BOM Item 3', '<no entry>', false],
  ['BOM Item 4', '<no entry>', false],
];

function EntryTable() {
  return (
    <div className="mt-[10px] mr-[6px] flex h-[326px] overflow-hidden border-t-3 border-l-2 border-[#77757c] bg-[#f1eef4] font-['Open_Sans',sans-serif] text-[18px] leading-6">
      <table className="h-fit flex-1 table-fixed border-collapse">
        <thead>
          <tr className="h-8 text-left">
            <th aria-label="Row" className="w-[33px] border border-t-0 border-l-0 border-[#8f8d94]" />
            <th className="w-[320px] border border-t-0 border-[#8f8d94] p-0 pb-[3px] pl-2 font-normal">Name</th>
            <th className="border-b border-[#c9c7cd] p-0 pb-[3px] pl-[7px] font-bold">Entry</th>
          </tr>
        </thead>
        <tbody>
          {entries.map(([name, value, checked], i) => (
            <tr key={name} className="h-[33px]">
              <td className="border border-l-0 border-[#8f8d94]" />
              <td className="border-b border-[#c9c7cd] p-0">
                <div className="flex h-[32px] items-center">
                  <span className="relative mt-[2px] ml-1 flex h-[27px] w-[27px]">
                    <input id={`attr-${i}`} type="checkbox" defaultChecked={checked} className="h-full w-full appearance-none border-3 border-[#77757c] bg-white" />
                    {checked && <Check size={17} strokeWidth={4} className="pointer-events-none absolute top-[5px] left-[5px] text-black" />}
                  </span>
                  <span className="w-[38px] pb-1 text-center text-[23px] text-[#66646b]">A</span>
                  <label htmlFor={`attr-${i}`} className="pb-[5px]">{name}</label>
                </div>
              </td>
              <td className={`border-b border-l border-[#c9c7cd] p-0 ${i < 6 ? 'bg-white' : ''}`}>
                {i === 2 ? (
                  <div className="flex h-[32px] border-2 border-[#55535a]">
                    <input aria-label="Entry value" defaultValue={value} className="min-w-0 flex-1 pl-1" />
                    <button type="button" className="w-[26px] border-x-2 border-[#77757c] bg-[#f1eef4] font-bold">...</button>
                    <button type="button" aria-label="Open list" className="flex w-[26px] items-center justify-center bg-[#f1eef4]">
                      <svg viewBox="0 0 8 6" className="h-2 w-[11px]"><path d="M0 0h8L4 6z" /></svg>
                    </button>
                  </div>
                ) : (
                  <div className="pb-[5px] pl-[5px] whitespace-nowrap">{value}</div>
                )}
              </td>
            </tr>
          ))}
        </tbody>
      </table>
      <VScroll className="w-[29px]" thumb={<div className="h-[75px] bg-[#cfcdd3]" />} />
    </div>
  );
}

function DeviceDialog() {
  const group = 'border-2 border-[#e4e2e8] pl-[7px] pr-1';
  const button = 'h-[33px] w-[115px] border-2';
  return (
    <div
      role="dialog"
      aria-label="Device Properties"
      className="absolute top-[63px] left-[136px] w-[1133px] border-2 border-[#3e898d] bg-[#f4f1f6] font-['Liberation_Sans',sans-serif] text-[17px] text-[#26242b] shadow-[0_6px_28px_rgba(60,40,80,0.25)]"
    >
      <div className="flex h-[47px] items-center bg-[#3e898d] pr-[12px] pl-3 font-['Open_Sans',sans-serif] text-white">
        <h1 className="flex-1 pb-[2px] text-[17px]">Device Properties</h1>
        <button type="button" aria-label="Close" className="pb-[3px]"><X size={22} strokeWidth={1.5} /></button>
      </div>
      <div className="flex items-end px-[10px] pt-[11px]">
        <button type="button" className="relative -mb-[2px] h-[35px] w-[77px] border-2 border-b-0 border-[#e4e2e8] bg-white pb-1">Device</button>
        {tabs.map(([tab, width]) => (
          <button key={tab} type="button" className={`h-[28px] border-2 border-b-0 border-l-0 border-[#e4e2e8] whitespace-nowrap ${width}`}>{tab}</button>
        ))}
      </div>
      <div className="mx-[10px] border-2 border-[#e4e2e8] bg-white px-[17px] pt-[22px] pb-[8px]">
        <div className={`flex flex-col gap-[5px] pt-3 pb-1 ${group}`}>
          <Field id="designation" label="Device designation:" box="on" value="J1" />
          <Field id="level" label="Higher level assignment:" box="on" value="<no entry>" />
          <Field id="location" label="Location:" box="off" value="<no entry>" />
          <Field id="view" label="View number:" value="Formboard:2" disabled />
        </div>
        <div className={`mt-[9px] pt-[3px] pb-[2px] ${group}`}>
          <TickRow id="remove" label="Remove from current assembly" disabled />
          <TickRow id="create" label="Create assembly" />
          <div className="flex h-[27px] items-center">
            <TickRow id="move" label="Move to assembly:" className="w-[261px]" />
            <Combo id="assembly" value="<no entry>" disabled className="w-[675px]" />
            <div className="ml-[10px] flex items-center text-[#8f8d94]">
              <Tick id="list-all" disabled />
              <label htmlFor="list-all" className="ml-1">List all ...</label>
            </div>
          </div>
          <TickRow id="insert" label="Insert assembly designation before device designations" disabled className="pl-[38px]" />
          <TickRow id="inherit" label="Inherit item designation from assembly" disabled />
        </div>
        <div className={`mt-2 flex flex-col gap-[7px] pt-1 ${group}`}>
          <Field id="component" label="Component:" box="disabled" value="DT04-3P">
            <button type="button" className="mr-[3px] ml-[5px] h-[31px] w-[36px] border-2 border-[#b9b7bd] bg-[#e4e2e7] font-bold">...</button>
          </Field>
          <Field id="options" label="List options:" value="Expand pins" gray className="w-[420px]">
            <label htmlFor="created" className="ml-[22px] flex-1">Created with view number:</label>
            <input id="created" className="h-[35px] w-[75px] border-2 border-[#e4e2e8]" />
          </Field>
          <div className="flex h-[31px] items-center pl-[703px]">
            <label htmlFor="terminal" className="w-[275px]">Use pin terminal symbols:</label>
            <Tick id="terminal" />
          </div>
        </div>
        <div className={`mt-2 flex flex-col gap-[5px] pt-2 pb-[6px] ${group}`}>
          <Field id="table-symbol" label="Table symbol:" value="<no entry>" disabled />
          <Field id="template" label="Default Template:" value="<no entry>" />
        </div>
        <EntryTable />
        <div className="grid grid-cols-[539px_1fr] gap-y-[7px] pt-[7px] pl-[9px] [&_label]:ml-[5px]">
          <TickRow id="purge" label="Don't purge if device is unused" />
          <TickRow id="structure" label="Use structure from device" checked disabled />
          <TickRow id="master" label="Device is master of assembly" disabled />
          <TickRow id="sealed" label="Sealed" />
        </div>
      </div>
      <div className="flex justify-end gap-[13px] px-[10px] pt-[14px] pb-[12px]">
        <button type="button" className={`${button} border-[#4180c4] bg-[#e8edf5]`}>OK</button>
        <button type="button" className={`${button} border-[#c3c1c7] bg-[#e9e7ec]`}>Cancel</button>
        <button type="button" disabled className={`${button} border-[#c9c7cd] bg-[#d2d0d6] text-[#a3a1a8]`}>Apply</button>
        <button type="button" className={`${button} border-[#c3c1c7] bg-[#e9e7ec]`}>Help</button>
      </div>
      <svg viewBox="0 0 12 12" className="absolute right-[2px] bottom-[2px] h-3 w-3 fill-[#b4b2b9]">
        <path d="M9 0h2v2H9zM9 4h2v2H9zM5 4h2v2H5zM9 8h2v2H9zM5 8h2v2H5zM1 8h2v2H1z" />
      </svg>
      <svg viewBox="0 0 40 64" className="absolute top-[1112px] left-[669px] h-[64px] w-[40px]">
        <path d="M2 2v50l11-10 9 20 8-4-9-19h16z" fill="#fff" stroke="#26242b" strokeWidth="3" />
      </svg>
    </div>
  );
}

function Canvas() {
  return (
    <main className="relative flex min-w-0 flex-1 flex-col border border-[#c9c7ce] bg-white">
      <div className="flex flex-1">
        <div className="relative min-w-0 flex-1 overflow-hidden">
          <svg viewBox="0 0 1279 1380" className="absolute top-0 left-0 h-[1380px] w-[1279px]">
            <rect x="0" y="283" width="74" height="67" fill="#e4e2e8" />
            <path d="M0 283h74M0 350h74M0 426h74M0 502h74M0 577h74M0 678h74V283" fill="none" stroke="#111" strokeWidth="2" />
            <path d="M71 284h36M105 286h33" stroke="#000" strokeWidth="6" />
            <path d="M1266 475h13" stroke="#3a3a9c" strokeWidth="2" />
            <text x="-19" y="657" fontSize="80" fontFamily="Inter, sans-serif" fontWeight="900" fill="#2b292f">N</text>
            <text x="49" y="660" fontSize="22" fontFamily="Liberation Sans, sans-serif" fill="#2b292f">®</text>
            <text x="-21" y="889" fontSize="40" fontFamily="Liberation Mono, monospace" fontWeight="700">1-204-1605</text>
            <text x="1262" y="889" fontSize="40" fontFamily="Liberation Mono, monospace" fontWeight="700">6</text>
          </svg>
        </div>
        <VScroll thumb={<div className="mt-[284px] h-[168px] bg-[#cfcdd3]" />} />
      </div>
      <HScroll className="h-7 pr-6" thumb={<div className="ml-[228px] w-[112px] bg-[#cfcdd3]" />} />
      <DeviceDialog />
    </main>
  );
}

const parts: [string, string, string][] = [
  ['2', '0411-204-1605', 'CONNECTORS - CONTACT REMOVAL TOOL-SIZE 16'],
  ['0', '0411-310-1605', 'CONNECTORS - CONTACT REMOVAL TOOL-SIZE 16-E SEAL'],
  ['0', '0411-336-1605', 'CONNECTORS - Hand Tools SZ 16 PROBE TOOL EXTRACTION'],
  ['0', '1011-233-0305', 'CONNECTORS - RECEPTACLE, BACKSHELL, 3 CONTACT, INTERNAL STRAIN RELIEF'],
  ['0', '1011-234-0305', 'CONNECTORS - RECEPTACLE, BACKSHELL, 3 CONTACT, INTERNAL STRAIN RELIEF'],
  ['0', '1011-261-0305', 'CONNECTORS - RECEPTACLE, BACKSHELL, 3 CONTACT, INTERNAL STRAIN RELIEF'],
  ['0', '1011-262-0305', 'CONNECTORS - RECEPTACLE, BACKSHELL, 3 CONTACT, INTERNAL STRAIN RELIEF'],
  ['0', '1011-345-0305', 'CONNECTORS - PLUG, DUST CAP, 3 CONTACT'],
  ['0', 'DT04-3P-P007', 'CONNECTORS - CONN,DEU,DT 3 J'],
  ['0', 'DT3P-BT', 'CONNECTORS - RECEPTACLE, BOOT, 3 CONTACT, GRAY'],
  ['0', 'DT3P-BT-BK', 'CONNECTORS - RECEPTACLE, BOOT, 3 CONTACT, BLACK'],
  ['0', 'DT3P-BT-YW', 'CONNECTORS - RECEPTACLE, BOOT, 3 CONTACT, YELLOW'],
  ['1', 'W3P', 'CONNECTORS - WEDGE LOCK DT'],
  ['0', 'W3P-1939', 'CONNECTORS - WEDGELOCK, 3 PLUG'],
];

function RightDock() {
  return (
    <aside className="ml-3 flex w-[1197px] shrink-0 flex-col pr-[3px]">
      <PanelTitle>Additional Parts</PanelTitle>
      <section className="ml-[3px] flex flex-1 flex-col bg-[#393c45] px-[18px] font-['Roboto',sans-serif] text-[23px] text-[#eeeef1]">
        <div className="flex items-center justify-between pt-[10px] pr-3">
          <div className="relative h-[48px] w-[412px]">
            <select aria-label="Component" className="h-full w-full appearance-none border border-[#15161d] bg-[#23252e] pb-[2px] pl-[16px]">
              <option>DT04-3P</option>
            </select>
            <ChevronDown size={26} strokeWidth={3} className="pointer-events-none absolute top-3 right-3" />
          </div>
          <button
            type="button"
            role="switch"
            aria-checked="true"
            aria-label="Show parts"
            className="flex h-12 w-[102px] justify-end rounded-full border-2 border-[#8fd0bb] bg-linear-to-r from-[#6fb795] to-[#86c4a2] p-[1px]"
          >
            <span className="h-full w-[43px] rounded-full border-2 border-[#a9dccb] bg-linear-to-br from-[#a9b7af] to-[#c3c9c5]" />
          </button>
        </div>
        <div className="mt-[13px] flex-1 overflow-hidden bg-[#111517]">
          <table className="h-[564px] w-full table-fixed border-collapse">
            <thead>
              <tr className="h-[35px] bg-[#23252e]">
                <th className="w-[87px] border-r-2 border-[#15161d] p-0 pl-2 text-left">Qty</th>
                <th className="w-[184px] border-r-2 border-[#15161d] p-0 pl-2 text-left">Part Number</th>
                <th className="p-0 pl-[140px]">Type - Description</th>
              </tr>
            </thead>
            <tbody>
              {parts.map(([qty, number, text], i) => (
                <tr key={number} className={i === 0 ? 'bg-[#baabf7] text-[#2c2752]' : 'bg-[#393c45]'}>
                  <td className="border-r-2 border-b-2 border-[#15161d] p-0 pl-[6px]">{qty}</td>
                  <td className="border-r-2 border-b-2 border-[#15161d] p-0 pl-[5px]">{number}</td>
                  <td className="overflow-hidden border-b-2 border-[#15161d] p-0 pl-[5px] text-[24px] leading-[34px] whitespace-nowrap">{text}</td>
                </tr>
              ))}
            </tbody>
          </table>
        </div>
        <HScroll className="h-[27px] border-2 border-white" thumb={<div className="w-[952px] bg-[#d2d1d4]" />} />
        <div className="flex h-[83px] items-center pb-[14px]">
          <span className="relative flex h-[18px] w-[18px]">
            <input id="ignore" type="checkbox" defaultChecked className="h-full w-full appearance-none bg-white" />
            <Check size={18} className="pointer-events-none absolute top-0 left-0 text-[#26242b]" />
          </span>
          <label htmlFor="ignore" className="ml-[10px] flex-1 font-['Liberation_Sans',sans-serif]">
            Ignore Connectors / Terminal Crimps
          </label>
          <div className="mr-[15px] flex gap-5 text-[#e6e6ea]">
            <button type="button" aria-label="Apply" className="flex h-[53px] w-[53px] items-center justify-center rounded-full border-3 border-[#7ab892] bg-[#4a9f6c]"><Check size={28} strokeWidth={2} /></button>
            <button type="button" aria-label="Refresh" className="flex h-[53px] w-[53px] items-center justify-center rounded-full border-3 border-[#9184cb] bg-[#6c58b8]"><RefreshCw size={32} strokeWidth={2} /></button>
            <button type="button" aria-label="Cancel" className="flex h-[53px] w-[53px] items-center justify-center rounded-full border-3 border-[#c06a77] bg-[#a83f51]"><X size={28} strokeWidth={2} /></button>
          </div>
        </div>
      </section>
      <div className="flex gap-[7px] pl-[5px]">
        <DockTab label="Harness Builder" line="border-[#cdd3ee]" />
        <DockTab label="Additional Parts" active line="border-[#f0d77f]" />
        <DockTab label="View/Edit Strip Lengths" line="border-[#ccd2b0]" />
        <DockTab label="Data Sheet Viewer" line="border-[#e3a9b0]" />
        <DockTab label="Item Number Editor" line="border-[#c3b3e0]" />
        <DockTab label="Wire List Import" line="border-[#b0cbc6]" />
      </div>
    </aside>
  );
}

const menus = ['File', 'Edit', 'View', 'Insert', 'Format', 'Tools', 'Add-ons', 'Window', 'Help'];

function App() {
  return (
    <div className="flex min-h-screen flex-col bg-[#ebe8ee] font-['Open_Sans',sans-serif]">
      <header className="flex h-[38px] items-center border-b-2 border-[#a5473f] bg-[#c34f43] pr-[20px] pl-1 text-[17px] text-[#f6d9d4]">
        <svg viewBox="0 0 28 30" className="mr-[10px] h-[30px] w-7">
          <rect x="1" y="1" width="10" height="10" fill="#8e1f1c" />
          <path d="M4 14l6 6M12 8l4 12M23 8l-7 12M14 18v10M18 18v10M22 16v12M26 17v11" stroke="#f6e4e0" strokeWidth="2" fill="none" />
        </svg>
        <span className="flex-1">RR_FASCIA_DEMO.e3s - E³.cable - [Sheet 2]</span>
        <button type="button" aria-label="Minimize" className="mr-[45px] h-[3px] w-[10px] bg-current" />
        <button type="button" aria-label="Maximize" className="mr-[42px] h-[14px] w-[14px] border-2 border-current" />
        <button type="button" aria-label="Close"><X size={16} strokeWidth={3} /></button>
      </header>
      <nav className="flex h-[41px] items-center bg-[#ebebee] pr-[10px] text-[18px] text-[#4c4a51]">
        <Grip />
        <span className="mr-[17px] flex w-[26px] items-center text-[24px] font-bold text-[#cf4a4e] italic">
          E<sup className="text-[16px]">3</sup>
        </span>
        <div className="flex flex-1 gap-[23px]">
          {menus.map((menu) => <button key={menu} type="button">{menu}</button>)}
        </div>
        <div className="flex items-center gap-3 text-[#77757c]">
          <button type="button" aria-label="Minimize sheet" className="h-[3px] w-[10px] bg-current" />
          <button type="button" aria-label="Restore sheet">
            <svg viewBox="0 0 14 14" className="h-[15px] w-[14px]">{line('M4 4V1h9v8h-3M1 5h9v8H1z', '#77757c')}</svg>
          </button>
          <button type="button" aria-label="Close sheet"><X size={16} strokeWidth={3} /></button>
        </div>
      </nav>
      <Toolbars />
      <div className="flex flex-1 pt-[1px]">
        <LeftDock />
        <div className="w-[5px] shrink-0 bg-[#dddae1]" />
        <Canvas />
        <RightDock />
      </div>
      <footer className="flex h-[26px] items-center bg-[#f4f1f6] pt-[8px] pr-2 pl-3 text-[16px] leading-none text-[#55535a]">
        <span className="flex-1">Ready</span>
        <span className="mr-10">7.38 | 23.89</span>
        <span className="mr-6">INCH</span>
        <span className="mr-[10px] text-[#b4b2b9]">CAP</span>
        <span className="mr-[10px]">NUM</span>
        <span className="mr-4 text-[#b4b2b9]">SCRL</span>
        <svg viewBox="0 0 12 12" className="h-3 w-3 fill-[#b4b2b9]">
          <path d="M9 0h2v2H9zM9 4h2v2H9zM5 4h2v2H5zM9 8h2v2H9zM5 8h2v2H5zM1 8h2v2H1z" />
        </svg>
      </footer>
    </div>
  );
}

export default App;
